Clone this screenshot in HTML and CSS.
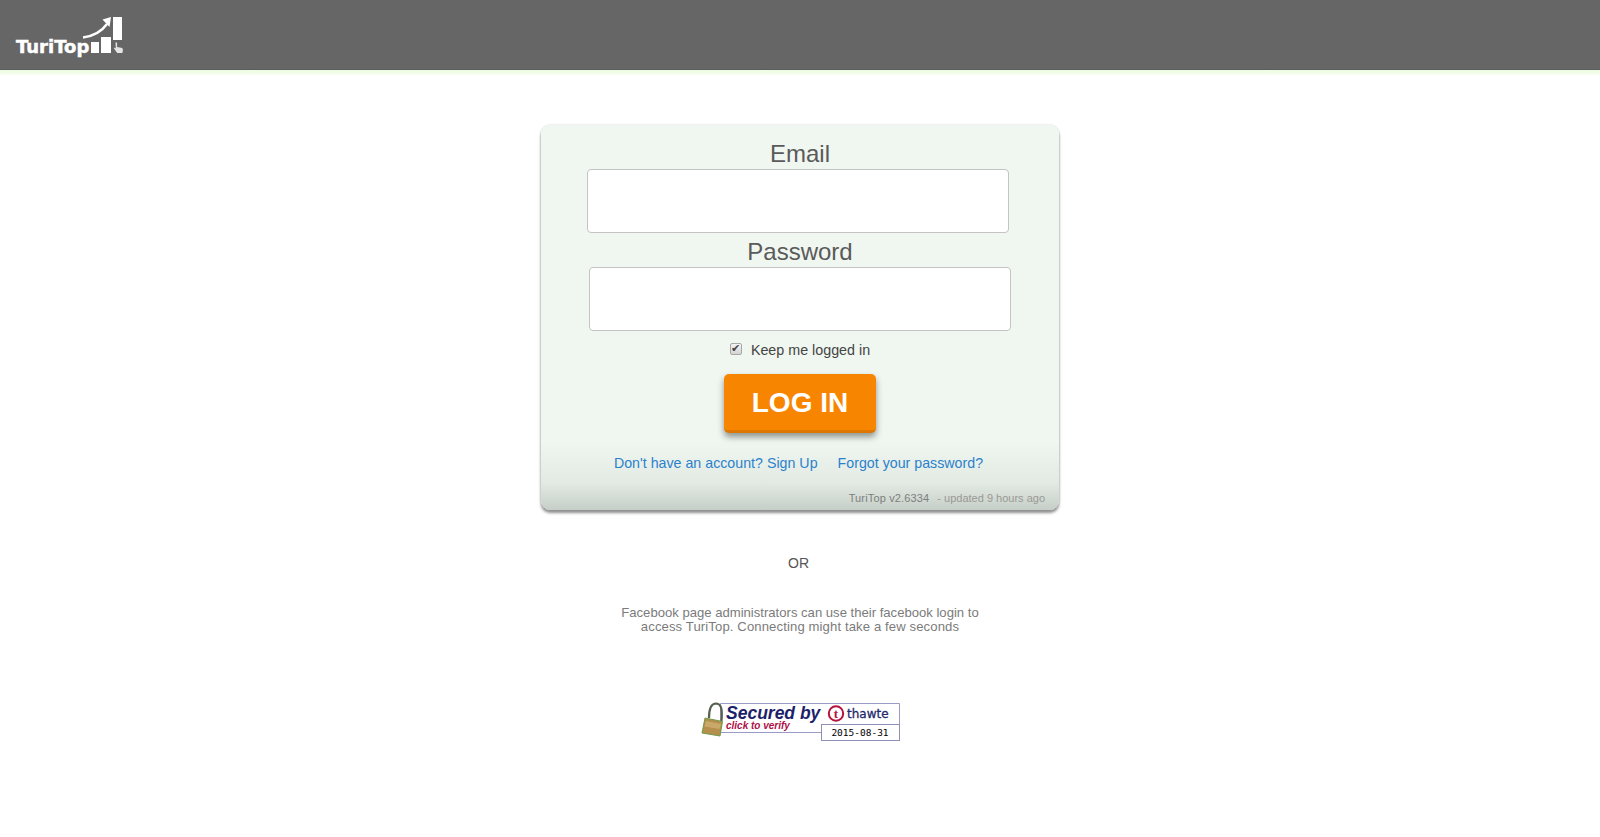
FILE: index.html
```html
<!DOCTYPE html>
<html lang="en">
<head>
<meta charset="utf-8">
<title>TuriTop</title>
<link rel="stylesheet" href="styles.css">
</head>
<body>
<header class="topbar">
  <a class="logo" href="#">
    <span class="logo-text">TuriTop</span>
    <svg class="logo-mark" width="42" height="38" viewBox="0 0 42 38">
      <path d="M1 21.500C12 20 20 15 25 8" fill="none" stroke="#fff" stroke-width="2.500"/>
      <path d="M20.500 3.500L29 1L27.500 11Z" fill="#fff"/>
      <rect x="9" y="26" width="8" height="11" fill="#fff"/>
      <rect x="19" y="21" width="10" height="16" fill="#fff"/>
      <rect x="31" y="1" width="9" height="23" fill="#fff"/>
      <path d="M33.500 26.500h1.600v4.500l4 .8c1.400.3 1.900 1.200 1.800 2.400l-.5 2.800h-5.200l-3.400-4.800 1-.8 1 1Z" fill="#e4e4e4"/>
    </svg>
  </a>
</header>
<div class="topbar-glow"></div>
<main class="page">
  <form class="panel">
    <label class="field-label" for="email">Email</label>
    <input class="field field-email" id="email" type="text">
    <label class="field-label field-label-pass" for="password">Password</label>
    <input class="field" id="password" type="password">
    <label class="keep"><input class="keep-box" type="checkbox" checked><span>Keep me logged in</span></label>
    <button class="login" type="button">LOG IN</button>
    <div class="links">
      <a href="#">Don't have an account? Sign Up</a>
      <a href="#">Forgot your password?</a>
    </div>
    <div class="version"><span class="version-name">TuriTop v2.6334</span><span>- updated 9 hours ago</span></div>
  </form>
  <p class="or">OR</p>
  <p class="fb-note">Facebook page administrators can use their facebook login to<br><span class="fb-note-second">access TuriTop. Connecting might take a few seconds</span></p>
  <svg class="seal" width="200" height="42" viewBox="0 0 200 42">
    <path d="M20.500 3.500H199.500V24.500H121.500V32.500H20.500Z" fill="#fff" stroke="#9a9ac4"/>
    <rect x="121.500" y="24.500" width="78" height="16" fill="#fff" stroke="#8f8fb5"/>
    <path d="M9 18C9 10 10 4 15.500 3.500C21.500 3.500 22.500 9 21.500 21" fill="none" stroke="#56614f" stroke-width="2.200"/>
    <path d="M5 18L22.500 21.500L20 36L2 33Z" fill="#b58f4c" stroke="#6f9a4a"/>
    <path d="M6 21L21 24L19.500 29L4.500 26.500Z" fill="#c9a86a"/>
    <text x="26" y="19" class="seal-secured">Secured by</text>
    <text x="26" y="29" class="seal-click">click to verify</text>
    <circle cx="136" cy="13.500" r="7.200" fill="#fff" stroke="#b5123e" stroke-width="2"/>
    <text x="136" y="18" class="seal-t">t</text>
    <text x="147" y="18" class="seal-thawte">thawte</text>
    <text x="160" y="36" class="seal-date">2015-08-31</text>
  </svg>
</main>
</body>
</html>
```
FILE: styles.css
```css
* { box-sizing: border-box; }
html, body { margin: 0; padding: 0; }
body {
  background: #fff;
  font-family: "Liberation Sans", Arial, sans-serif;
  color: #444;
  height: 837px;
  overflow: hidden;
}
.topbar {
  height: 70px;
  background: #666;
  border-bottom: 1px solid #5c5c5c;
  padding: 16px 0 0 16px;
}
.topbar-glow {
  height: 6px;
  background: linear-gradient(#ebfce0 0, #f3fdec 60%, #fff 100%);
}
.logo { display: flex; align-items: flex-start; text-decoration: none; width: 112px; }
.logo-text {
  font-family: "DejaVu Sans", sans-serif;
  font-weight: 700;
  font-size: 18px;
  line-height: 20px;
  color: #fff;
  -webkit-text-stroke: .5px #fff;
  margin-top: 21px;
  width: 66px;
  flex: none;
  white-space: nowrap;
}
.logo-mark { flex: none; }
.page { display: flex; flex-direction: column; align-items: center; }
.panel {
  width: 518px;
  height: 385px;
  margin-top: 49px;
  padding-top: 15px;
  border-radius: 9px;
  background: linear-gradient(#f0f6f0 0, #f0f6f0 82%, #e3eae4 93%, #c6cec8 100%);
  box-shadow: 0 3px 3px #8f8f8f, 0 0 2px #c8c8c8;
  display: flex;
  flex-direction: column;
  align-items: center;
}
.field-label { font-size: 24px; line-height: 28px; margin-bottom: 1px; color: #5a5a5a; }
.field-label-pass { margin-top: 5px; }
.field {
  display: block;
  width: 422px;
  height: 64px;
  background: #fff;
  border: 1px solid #c4c4c4;
  border-radius: 4px;
}
.field-email { margin-right: 4px; }
.keep {
  display: flex;
  align-items: center;
  height: 20px;
  margin-top: 9px;
  font-size: 14.300px;
  color: #444;
}
.keep-box {
  appearance: none;
  position: relative;
  top: -1px;
  width: 12px;
  height: 12px;
  margin: 0 9px 0 0;
  border: 1px solid #a8a8a8;
  border-radius: 2px;
  background: linear-gradient(#f4f4f4, #d4d4d4);
}
.keep-box::after {
  content: "\2714";
  position: absolute;
  left: 0;
  top: -2px;
  font-size: 11px;
  line-height: 13px;
  color: #444;
}
.login {
  display: block;
  width: 152px;
  height: 59px;
  margin-top: 14px;
  padding: 2px 0 0;
  border: 0;
  border-bottom: 3px solid #de7700;
  border-radius: 5px;
  background: #f88500;
  box-shadow: 0 4px 6px rgba(60, 70, 60, .55);
  color: #fff;
  font: 700 28px "Liberation Sans", Arial, sans-serif;
}
.links {
  display: flex;
  gap: 20px;
  margin-top: 20px;
  margin-right: 3px;
  line-height: 20px;
  font-size: 14.200px;
  letter-spacing: .02px;
}
.links a { color: #2a82cc; text-decoration: none; }
.version {
  align-self: flex-end;
  margin-top: 17px;
  margin-right: 14px;
  font-size: 11px;
  line-height: 16px;
  color: #9a9a94;
  white-space: nowrap;
}
.version-name { color: #7d807d; margin-right: 8px; letter-spacing: .15px; }
.or { margin: 44px 3px 0 0; font-size: 14px; line-height: 18px; color: #555; }
.fb-note {
  margin: 34px 0 0;
  font-size: 13.100px;
  line-height: 14px;
  color: #7b7b7b;
  text-align: center;
}
.fb-note-second { letter-spacing: .12px; }
.seal { display: block; margin-top: 66px; }
.seal-secured { font: italic 700 17.500px "Liberation Sans", Arial, sans-serif; fill: #1d1f6b; }
.seal-click { font: italic 700 10px "Liberation Sans", Arial, sans-serif; fill: #ad0f47; }
.seal-t { font: 700 13px "Liberation Serif", serif; fill: #b5123e; text-anchor: middle; }
.seal-thawte { font: 12px "DejaVu Sans", sans-serif; fill: #23286b; stroke: #23286b; stroke-width: .3px; }
.seal-date { font: 9.500px "DejaVu Sans Mono", monospace; fill: #000; text-anchor: middle; }
```
